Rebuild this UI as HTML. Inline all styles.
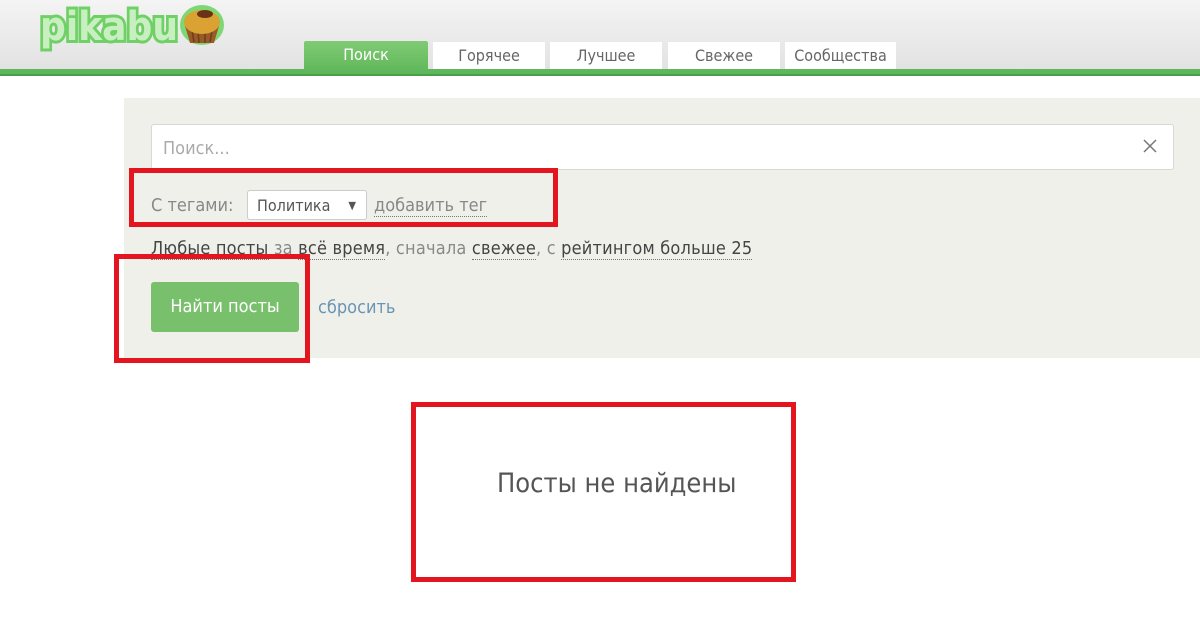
<!DOCTYPE html>
<html><head><meta charset="utf-8">
<style>
*{margin:0;padding:0;box-sizing:border-box}
body{width:1200px;height:628px;position:relative;overflow:hidden;background:#fff;font-family:"DejaVu Sans Condensed","Liberation Sans",sans-serif;}
.hdr{position:absolute;left:0;top:0;width:1200px;height:70px;background:linear-gradient(#f4f4f4,#e2e2e2);}
.gl{position:absolute;left:0;top:69px;width:1200px;height:7px;background:#5cb85a;border-bottom:2px solid #4aa048}
.tab{position:absolute;top:42px;height:27px;background:#fff;color:#666;font-size:16px;text-align:center;line-height:27px;}
.tab.a{background:linear-gradient(#7fcb75,#63b85b);color:#fff;top:41px;height:29px;border-radius:2px 2px 0 0}
.panel{position:absolute;left:124px;top:98px;width:1076px;height:260px;background:#f0f0eb}
.inp{position:absolute;left:151px;top:124px;width:1023px;height:46px;background:#fff;border:1px solid #d8d8d4;border-radius:3px;color:#aaa;font-size:18px;line-height:48px;padding-left:11px}
.t{position:absolute;font-size:18px;white-space:nowrap}
.u{border-bottom:1px dotted #777}
.red{position:absolute;border:5px solid #e3161f}
</style></head><body>
<div class="hdr"></div>
<svg style="position:absolute;left:30px;top:0" width="200" height="54">
<text x="10" y="40" font-family="DejaVu Sans" font-weight="bold" font-size="40" textLength="138" lengthAdjust="spacingAndGlyphs" fill="#c7efbf" stroke="#6fd066" stroke-width="6" paint-order="stroke">pikabu</text>
<ellipse cx="172" cy="25" rx="22" ry="20" fill="#7dd874"/>
<path d="M155 26 L160 43 L184 43 L189 26Z" fill="#9a5a28"/>
<path d="M162 30 L164 42 M168 30 L169 43 M175 30 L175 43 M182 30 L180 42" stroke="#6e3c17" stroke-width="1.5"/>
<ellipse cx="172" cy="22" rx="18" ry="12" fill="#d9a232"/>
<ellipse cx="175" cy="14" rx="8" ry="4" fill="#6b3315"/>
</svg>
<div class="gl"></div>
<div class="tab a" style="left:304px;width:124px">Поиск</div>
<div class="tab" style="left:433px;width:112px">Горячее</div>
<div class="tab" style="left:550px;width:112px">Лучшее</div>
<div class="tab" style="left:668px;width:112px">Свежее</div>
<div class="tab" style="left:785px;width:111px">Сообщества</div>
<div class="panel"></div>
<div class="inp">Поиск...</div>
<svg style="position:absolute;left:1143px;top:139px" width="14" height="14"><path d="M1 1L13 13M13 1L1 13" stroke="#777" stroke-width="1.5"/></svg>
<div class="t" style="left:151px;top:195px;color:#888">С тегами:</div>
<div style="position:absolute;left:247px;top:190px;width:120px;height:30px;background:#fff;border:1px solid #ccc;border-radius:3px;font-size:16px;color:#555;line-height:30px;padding-left:9px">Политика<span style="position:absolute;right:10px;top:0;font-size:11px;color:#555">▼</span></div>
<div class="t" style="left:374px;top:195px;color:#888"><span class="u">добавить тег</span></div>
<div class="t" style="left:151px;top:238px;color:#888;letter-spacing:0.2px"><span class="u" style="color:#444">Любые посты</span> за <span class="u" style="color:#444">всё время</span>, сначала <span class="u" style="color:#444">свежее</span>, с <span class="u" style="color:#444">рейтингом больше 25</span></div>
<div style="position:absolute;left:151px;top:282px;width:148px;height:50px;background:#78c06c;border-radius:3px;color:#fff;font-size:18px;text-align:center;line-height:50px">Найти посты</div>
<div class="t" style="left:318px;top:297px;color:#6a94b5">сбросить</div>
<div class="t" style="left:497px;top:468px;font-size:27px;color:#555">Посты не найдены</div>
<div class="red" style="left:129px;top:168px;width:429px;height:59px"></div>
<div class="red" style="left:114px;top:254px;width:196px;height:109px"></div>
<div class="red" style="left:411px;top:402px;width:385px;height:180px"></div>
</body></html>
